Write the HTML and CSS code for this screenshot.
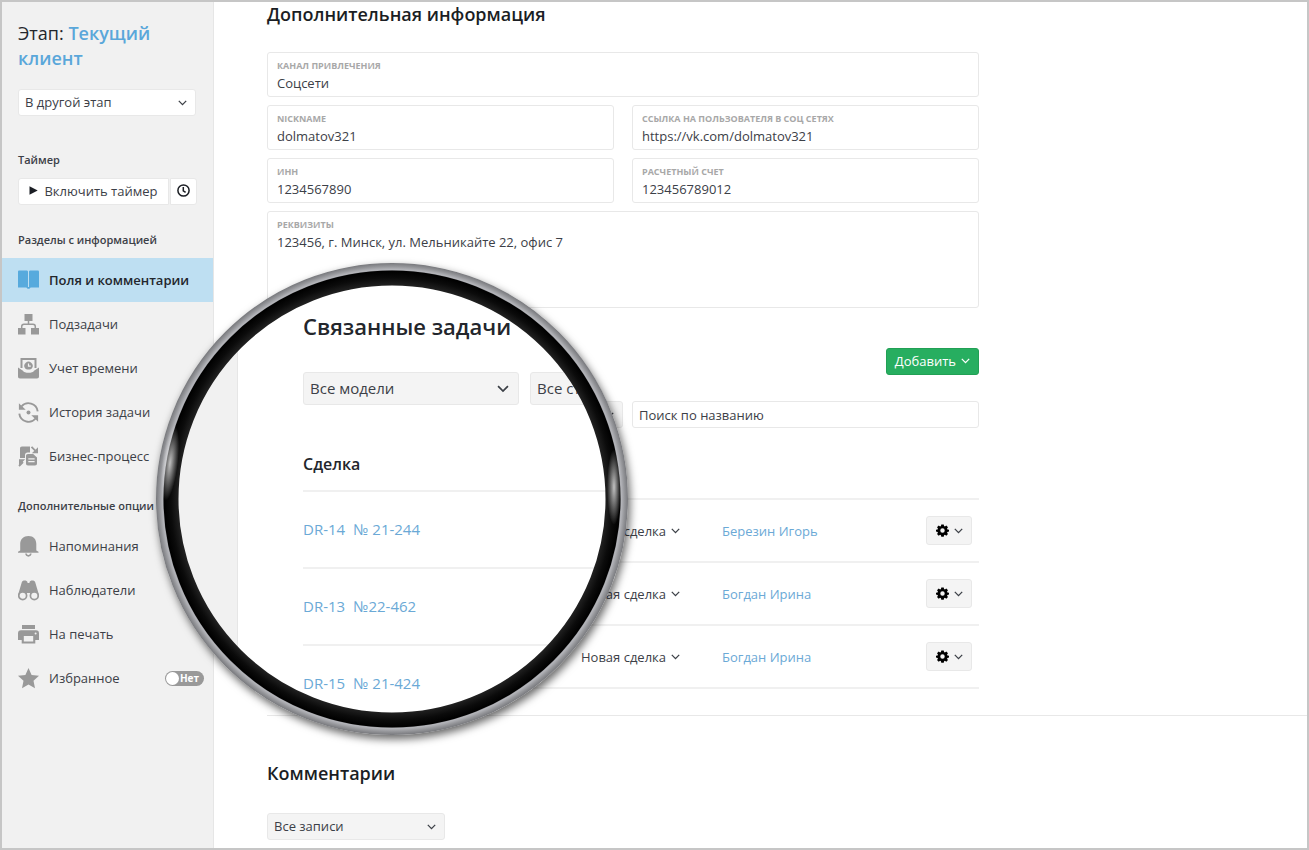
FILE: index.html
```html
<!DOCTYPE html>
<html lang="ru">
<head>
<meta charset="utf-8">
<title>Карточка клиента</title>
<link rel="stylesheet" href="styles.css">
</head>
<body>
<svg class="sprite" aria-hidden="true">
  <symbol id="chevron" viewBox="0 0 9 6"><path d="M.8.9l3.7 3.7L8.2.9" fill="none" stroke="currentColor" stroke-width="1.3"/></symbol>
  <symbol id="gear" viewBox="0 0 14 14"><path fill-rule="evenodd" d="M5.7.5h2.6l.4 1.7.9.4 1.5-1 1.8 1.8-1 1.5.4.9 1.7.4v1.9l-1.7.4-.4.9 1 1.5-1.8 1.8-1.5-1-.9.4-.4 1.6H5.7l-.4-1.6-.9-.4-1.5 1-1.8-1.8 1-1.5-.4-.9L0 8.100V6.200l1.700-.4.400-.9-1-1.500 1.800-1.800 1.500 1 .900-.4zM7 4.700a2.400 2.400 0 1 0 0 4.800 2.400 2.400 0 0 0 0-4.800z"/></symbol>
</svg>
<div class="app">
  <aside class="sidebar">
    <h1 class="stage">Этап: <a href="#stage"><span>Текущий</span> <span>клиент</span></a></h1>
    <div class="select stage-select">
      <select aria-label="Перевести в другой этап"><option>В другой этап</option></select>
      <svg class="chev"><use href="#chevron"/></svg>
    </div>

    <h2 class="group timer-title">Таймер</h2>
    <div class="timer">
      <button type="button" class="timer-start">
        <svg width="9" height="9" viewBox="0 0 9 9"><path d="M.5.3L8.700 4.500.5 8.700z" fill="#1b1e24"/></svg>
        Включить таймер
      </button>
      <button type="button" class="timer-log" aria-label="Журнал таймера">
        <svg width="13" height="13" viewBox="0 0 13 13" fill="none" stroke="#1b1e24" stroke-width="1.5"><circle cx="6.500" cy="6.500" r="5.600"/><path d="M6.300 3v3.800l2.300 1.600"/></svg>
      </button>
    </div>

    <h2 class="group">Разделы с информацией</h2>
    <nav class="menu">
      <a class="item active" href="#fields">
        <svg class="ico" viewBox="0 0 21 21"><path d="M0 2C0 1 .5.6 1.300.6h7c1 0 1.700.5 1.700 1.200v16.500c-.6-.5-1.200-.7-2-.7H0zM21 2c0-1-.5-1.400-1.300-1.400h-7c-1 0-1.700.5-1.700 1.200v16.500c.6-.5 1.200-.7 2-.7h8z"/><path d="M8.500 17h4l-1 1.700h-2z"/></svg>
        Поля и комментарии</a>
      <a class="item" href="#subtasks">
        <svg class="ico" viewBox="0 0 21 21"><path d="M6.500 0h8v7h-8zM0 14h7.500v6.500H0zM13 14h8v6.500h-8z"/><path d="M10.500 7v3M3.700 14v-1.500c0-1.500.8-2.300 2.300-2.300h9c1.500 0 2.300.8 2.300 2.300V14" fill="none" stroke="currentColor" stroke-width="1.500"/></svg>
        Подзадачи</a>
      <a class="item" href="#time">
        <svg class="ico" viewBox="0 0 21 21"><path d="M3.500 10V1.100h14V10" fill="none" stroke="currentColor" stroke-width="2"/><path d="M6.900 10a4.200 4.200 0 1 1 7.200 0c-1.200 2-6 2-7.200 0z"/><path d="M0 9.500l5 3.200c1 2.800 10 2.800 11 0l5-3.200v9c0 1.300-.7 2-2 2H2c-1.300 0-2-.7-2-2z"/><path d="M10.500 5.500v2.700h2.300" fill="none" stroke="#f1f1f1" stroke-width="1.200"/></svg>
        Учет времени</a>
      <a class="item" href="#history">
        <svg class="ico" viewBox="0 0 21 21"><g fill="none" stroke="currentColor" stroke-width="1.900"><path d="M3.400 4.500A9.300 9.300 0 0 1 19.700 9.300M17.600 16.500A9.300 9.300 0 0 1 1.300 11.700"/></g><path d="M.9 1.200v6.600h6.800zM20.100 19.800v-6.600h-6.800z"/><circle cx="10.500" cy="10.500" r="2"/></svg>
        История задачи</a>
      <a class="item" href="#process">
        <svg class="ico" viewBox="0 0 21 21"><path d="M2 12V2.500C2 1.200 2.700.5 4 .5h8v6H9.500C8 6.500 7 7.500 7 9v3z"/><path fill-rule="evenodd" d="M10 8h5.200L19 11.500v6c0 1.300-.7 2-2 2h-7c-1.300 0-2-.7-2-2V10c0-1.300.7-2 2-2zm.3 4.200v1.200h6.300v-1.200zm0 2.900v1.200h6.300v-1.200z"/><path d="M20 1.500v6h-6.200zM1 13.500h6.200L1 19.700z" transform="translate(0 -.3)"/><path d="M13.500.8L18 5.300M1 20l4-4" stroke="currentColor" stroke-width="1.800"/></svg>
        Бизнес-процесс</a>
    </nav>

    <h2 class="group extra-title">Дополнительные опции</h2>
    <nav class="menu">
      <a class="item" href="#reminders">
        <svg class="ico" viewBox="0 0 21 21"><path d="M2.200 14.500V8C2.200 3 5.500 0 10.500 0s7.800 3 7.800 8v6.500l2.200 1.300v.9H0v-.9z"/><path d="M8 17.500c.2 1.500 1 2.300 2.400 2.300s2.200-.8 2.400-2.300" fill="none" stroke="currentColor" stroke-width="1.700"/></svg>
        Напоминания</a>
      <a class="item" href="#watchers">
        <svg class="ico" viewBox="0 0 21 21"><path d="M3.800 2.200C4.200-.2 9.200-.2 9.500 2.200V3h2V2.200C11.800-.2 16.800-.2 17.200 2.200L21 15l-9 1.500V13H9v3.500L0 15z"/><g fill="#f1f1f1" stroke="currentColor" stroke-width="1.700"><circle cx="4.700" cy="15.700" r="3.900"/><circle cx="16.300" cy="15.700" r="3.900"/></g></svg>
        Наблюдатели</a>
      <a class="item" href="#print">
        <svg class="ico" viewBox="0 0 21 21"><path d="M4 1h13v4H4z"/><path fill-rule="evenodd" d="M3 6.200h15c2 0 3 1 3 3V16h-3.700v3.500H3.700V16H0V9.200c0-2 1-3 3-3zM5.800 12v5.500h9.400V12zM17.600 8.400a1 1 0 1 0 0 2 1 1 0 0 0 0-2z"/></svg>
        На печать</a>
      <div class="item">
        <svg class="ico" viewBox="0 0 21 21"><path d="M10.500 0l3.100 6.900 7.400.8-5.500 5 1.500 7.600-6.500-3.700L4 20.300l1.500-7.600L0 7.700l7.400-.8z"/></svg>
        <label for="fav">Избранное</label>
        <span class="switch"><input type="checkbox" id="fav"><span class="state">Нет</span></span>
      </div>
    </nav>
  </aside>

  <main class="main">
    <section class="block">
      <h2 class="title">Дополнительная информация</h2>
      <form class="fields">
        <div class="field wide"><label for="f1">Канал привлечения</label><input id="f1" value="Соцсети"></div>
        <div class="field"><label for="f2">Nickname</label><input id="f2" value="dolmatov321"></div>
        <div class="field"><label for="f3">Ссылка на пользователя в соц сетях</label><input id="f3" value="https://vk.com/dolmatov321"></div>
        <div class="field"><label for="f4">ИНН</label><input id="f4" value="1234567890"></div>
        <div class="field"><label for="f5">Расчетный счет</label><input id="f5" value="123456789012"></div>
        <div class="field wide"><label for="f6">Реквизиты</label><textarea id="f6">123456, г. Минск, ул. Мельникайте 22, офис 7</textarea></div>
      </form>
    </section>

    <section class="block related">
      <div class="toolbar"><button type="button" class="add">Добавить <svg class="chev"><use href="#chevron"/></svg></button></div>
      <div class="filters">
        <div class="select grey status-filter"><select aria-label="Статус"></select><svg class="chev"><use href="#chevron"/></svg></div>
        <input class="search" placeholder="Поиск по названию" aria-label="Поиск по названию">
      </div>
      <table class="tasks">
        <thead><tr><th class="c-name"></th><th class="c-status"></th><th class="c-user"></th><th class="c-act"></th></tr></thead>
        <tbody>
          <tr><td></td><td><button type="button" class="status">Новая сделка <svg class="chev"><use href="#chevron"/></svg></button></td><td><a href="#u1">Березин Игорь</a></td><td><button type="button" class="gear" aria-label="Действия"><svg width="13" height="13"><use href="#gear"/></svg><svg class="chev"><use href="#chevron"/></svg></button></td></tr>
          <tr><td></td><td><button type="button" class="status">Новая сделка <svg class="chev"><use href="#chevron"/></svg></button></td><td><a href="#u2">Богдан Ирина</a></td><td><button type="button" class="gear" aria-label="Действия"><svg width="13" height="13"><use href="#gear"/></svg><svg class="chev"><use href="#chevron"/></svg></button></td></tr>
          <tr><td></td><td><button type="button" class="status">Новая сделка <svg class="chev"><use href="#chevron"/></svg></button></td><td><a href="#u2">Богдан Ирина</a></td><td><button type="button" class="gear" aria-label="Действия"><svg width="13" height="13"><use href="#gear"/></svg><svg class="chev"><use href="#chevron"/></svg></button></td></tr>
        </tbody>
      </table>
    </section>

    <section class="comments">
      <h2 class="title">Комментарии</h2>
      <div class="select grey notes"><select aria-label="Тип записей"><option>Все записи</option></select><svg class="chev"><use href="#chevron"/></svg></div>
    </section>
  </main>

  <div class="lens">
    <div class="glass">
      <div class="glass-side"></div>
      <div class="glass-main">
        <h2>Связанные задачи</h2>
        <div class="glass-filters">
          <div class="select grey"><select aria-label="Модель"><option>Все модели</option></select><svg class="chev"><use href="#chevron"/></svg></div>
          <div class="select grey"><select aria-label="Статус задачи"><option>Все статусы</option></select></div>
        </div>
        <h3>Сделка</h3>
        <ul>
          <li><a href="#dr14"><span>DR-14</span><span>№ 21-244</span></a></li>
          <li><a href="#dr13"><span>DR-13</span><span>№22-462</span></a></li>
          <li><a href="#dr15"><span>DR-15</span><span>№ 21-424</span></a></li>
        </ul>
      </div>
    </div>
    <svg class="rim" viewBox="0 0 472 472" aria-hidden="true">
      <defs>
        <radialGradient id="metal" gradientUnits="userSpaceOnUse" cx="236" cy="236" r="236">
          <stop offset=".962" stop-color="#77787c"/><stop offset=".972" stop-color="#b4b5ba"/><stop offset=".985" stop-color="#96979b"/><stop offset="1" stop-color="#77787c"/>
        </radialGradient>
        <radialGradient id="black" gradientUnits="userSpaceOnUse" cx="236" cy="236" r="228">
          <stop offset=".938" stop-color="#202020"/><stop offset=".97" stop-color="#0b0b0b"/><stop offset="1" stop-color="#000"/>
        </radialGradient>
        <radialGradient id="shine"><stop offset="0" stop-color="#fff" stop-opacity=".75"/><stop offset="1" stop-color="#fff" stop-opacity="0"/></radialGradient>
      </defs>
      <circle cx="236" cy="236" r="231.500" fill="none" stroke="url(#metal)" stroke-width="9"/>
      <circle cx="236" cy="236" r="221" fill="none" stroke="url(#black)" stroke-width="15"/>
      <ellipse cx="14" cy="200" rx="8" ry="38" fill="url(#shine)" transform="rotate(7 14 200)"/>
      <ellipse cx="458" cy="224" rx="7" ry="38" fill="url(#shine)"/>
    </svg>
  </div>
</div>
</body>
</html>
```

FILE: styles.css
```css
* { box-sizing: border-box; }
body {
  margin: 0;
  font: 13px/18px "Open Sans", "Noto Sans", sans-serif;
  color: #3c4047;
  background: #fff;
}
h1, h2, h3, ul { margin: 0; padding: 0; font-weight: 400; }
ul { list-style: none; }
a { color: #6ba9d6; text-decoration: none; }
button, input, select, textarea { font: inherit; color: inherit; margin: 0; }
.sprite { position: absolute; width: 0; height: 0; }
.chev { width: 9px; height: 6px; flex: none; }

.app {
  position: relative;
  display: flex;
  min-height: 100vh;
  border: 2px solid #c6c6c6;
  overflow: hidden;
}

/* Sidebar */
.sidebar {
  width: 212px;
  flex: none;
  padding-top: 19px;
  background: #f1f1f1;
  border-right: 1px solid #e6e6e6;
}
.stage {
  margin: 0 16px 18px;
  font-size: 18px;
  line-height: 25px;
  color: #23262c;
}
.stage a { color: #5aa7da; font-weight: 600; }
.select {
  position: relative;
  height: 27px;
  background: #fff;
  border: 1px solid #e8e8e8;
  border-radius: 3px;
}
.select.grey { background: #f4f4f4; }
.select select {
  width: 100%;
  height: 100%;
  padding: 0 24px 2px 6px;
  appearance: none;
  border: 0;
  background: none;
}
.select .chev {
  position: absolute;
  right: 8px;
  top: 10px;
  pointer-events: none;
}
.stage-select { margin: 0 17px 0 16px; }
.group {
  margin: 26px 16px 9px;
  font-size: 11px;
  line-height: 18px;
  font-weight: 600;
}
.timer-title { margin-top: 35px; }
.timer { display: flex; margin: 0 16px; gap: 1px; }
.timer button {
  height: 27px;
  padding: 0 0 2px;
  display: flex;
  align-items: center;
  justify-content: center;
  gap: 6px;
  background: #fff;
  border: 1px solid #e8e8e8;
}
.timer .timer-start { width: 151px; border-radius: 3px 0 0 3px; }
.timer .timer-log { width: 27px; border-radius: 0 3px 3px 0; }
.item {
  display: flex;
  align-items: center;
  gap: 10px;
  height: 44px;
  padding: 0 9px 0 16px;
  color: #3c4047;
}
.item.active { background: #bedff2; color: #23262c; font-weight: 600; }
.ico { width: 21px; height: 21px; fill: currentColor; color: #999; flex: none; }
.active .ico { color: #57aadd; }
.switch {
  position: relative;
  display: flex;
  justify-content: flex-end;
  align-items: center;
  width: 39px;
  height: 15px;
  margin-left: auto;
  padding-right: 5px;
  border-radius: 8px;
  background: #999;
}
.switch input {
  position: absolute;
  left: 1px;
  top: 1px;
  width: 13px;
  height: 13px;
  appearance: none;
  border-radius: 50%;
  background: #fff;
}
.state { font-size: 10px; line-height: 14px; font-weight: 700; color: #fff; }
.extra-title { margin-top: 19px; }

/* Main column */
.main { flex: 1; min-width: 0; padding-left: 53px; }
.block { max-width: 712px; }
.title {
  font-size: 18px;
  line-height: 24px;
  font-weight: 600;
  color: #1b1e24;
}
.fields {
  display: grid;
  grid-template-columns: 1fr 1fr;
  gap: 8px 18px;
  margin-top: 26px;
}
.field {
  height: 45px;
  padding: 7px 9px 0;
  display: flex;
  flex-direction: column;
  border: 1px solid #e8e8e8;
  border-radius: 3px;
}
.field.wide { grid-column: 1 / -1; }
.field:last-child { height: 97px; }
.field label {
  font-size: 9px;
  line-height: 12px;
  font-weight: 700;
  text-transform: uppercase;
  color: #a8a8a8;
}
.field input, .field textarea {
  width: 100%;
  height: 22px;
  padding: 2px 0;
  line-height: 18px;
  border: 0;
  background: none;
  resize: none;
}
.field textarea { height: 70px; }

.toolbar { display: flex; justify-content: flex-end; margin-top: 40px; }
.add {
  display: flex;
  align-items: center;
  gap: 5px;
  height: 27px;
  padding: 0 8px 2px;
  color: #fff;
  background: #27ae60;
  border: 1px solid #22a055;
  border-radius: 3px;
}
.filters {
  display: grid;
  grid-template-columns: 178px 1fr 347px;
  gap: 9px;
  margin-top: 26px;
}
.status-filter { grid-column: 2; }
.search {
  height: 27px;
  padding: 0 6px;
  border: 1px solid #e8e8e8;
  border-radius: 3px;
  min-width: 0;
}
.search::placeholder { color: #3c4047; opacity: 1; }
.tasks { width: 100%; table-layout: fixed; border-collapse: collapse; }
.tasks th { height: 71px; padding: 0; }
.tasks td { height: 63px; padding: 0; }
.tasks tr { border-bottom: 2px solid #f0f0f0; }
.c-name { width: 314px; }
.c-status { width: 141px; }
.c-act { width: 53px; }
.status {
  display: flex;
  align-items: center;
  gap: 5px;
  padding: 0;
  border: 0;
  background: none;
}
.gear {
  display: flex;
  align-items: center;
  justify-content: center;
  gap: 5px;
  width: 46px;
  height: 29px;
  padding: 0;
  background: #f4f4f4;
  border: 1px solid #e8e8e8;
  border-radius: 3px;
}
.comments { margin-top: 26px; padding: 45px 0 7px; border-top: 1px solid #e8e8e8; }
.notes { width: 178px; margin-top: 28px; }

/* Magnifier laid over the page */
.lens {
  position: absolute;
  left: 154px;
  top: 261px;
  width: 472px;
  height: 472px;
  border-radius: 50%;
  box-shadow: 2px 4px 8px rgba(0, 0, 0, .6);
}
.rim { position: absolute; inset: 0; width: 100%; height: 100%; pointer-events: none; }
.glass {
  position: absolute;
  inset: 20px;
  display: flex;
  overflow: hidden;
  border-radius: 50%;
  background: #fff;
  font-size: 15px;
  line-height: 22px;
}
.glass-side { width: 62px; flex: none; background: #f1f1f1; border-right: 1px solid #e6e6e6; }
.glass-main { flex: none; width: 520px; padding: 27px 0 0 65px; }
.glass h2 { font-size: 22px; line-height: 32px; font-weight: 600; color: #23262c; }
.glass-filters { display: flex; gap: 11px; margin: 30px 0 48px; }
.glass .select { flex: none; width: 216px; height: 33px; }
.glass .chev { width: 12px; height: 8px; right: 9px; top: 12px; }
.glass h3 { font-size: 16px; font-weight: 600; color: #23262c; padding-bottom: 15px; }
.glass li { height: 77px; border-top: 2px solid #f0f0f0; padding-top: 26px; }
.glass li a { display: flex; gap: 8px; }
```
